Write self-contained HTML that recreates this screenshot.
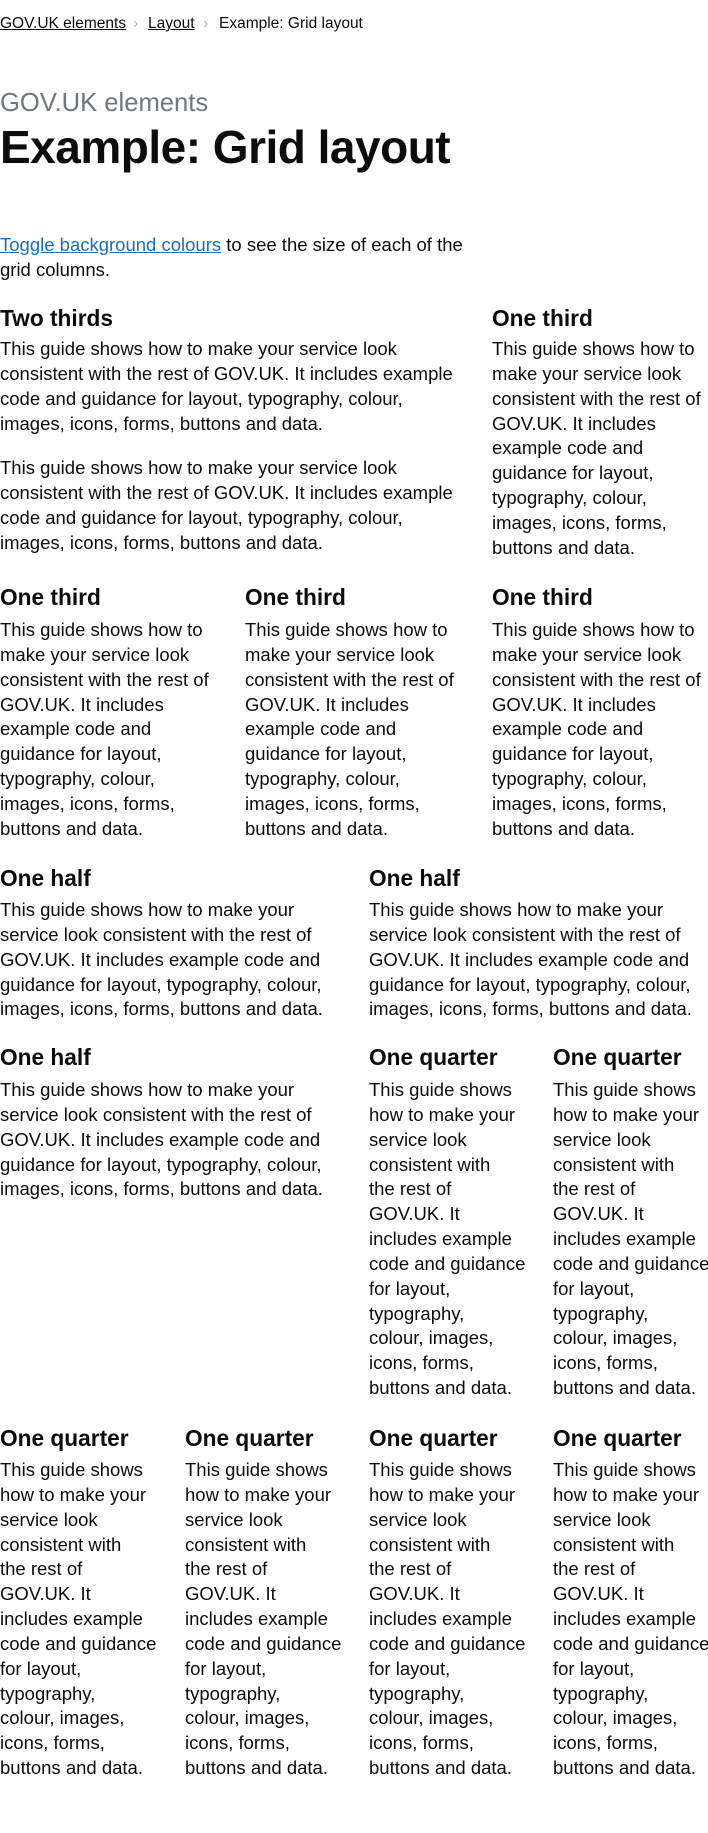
<!DOCTYPE html>
<html><head><meta charset="utf-8"><style>
html,body{margin:0;padding:0;background:#fff;}
body{width:708px;height:1833px;position:relative;overflow:hidden;font-family:"Liberation Sans",sans-serif;color:#0b0c0c;}
.a{position:absolute;white-space:nowrap;}
.h{font-weight:bold;font-size:22.7px;line-height:26px;}
.p{font-size:18.5px;line-height:24.85px;}
a{color:#0b0c0c;}
</style></head><body>
<div class="a" style="top:13px;left:0;font-size:15.5px;line-height:22px;">
<a href="#" style="position:absolute;left:0">GOV.UK elements</a>
<span style="position:absolute;left:133px;color:#b1b4b6">›</span>
<a href="#" style="position:absolute;left:148px">Layout</a>
<span style="position:absolute;left:203px;color:#b1b4b6">›</span>
<span style="position:absolute;left:219px">Example: Grid layout</span>
</div>
<div class="a" style="top:87px;left:0;font-size:25.6px;line-height:32px;color:#6f777b">GOV.UK elements</div>
<div class="a" style="top:121px;left:0;font-size:46px;line-height:52px;font-weight:bold;letter-spacing:-0.5px">Example: Grid layout</div>
<div class="a p" style="top:233px;left:0"><a href="#" style="color:#1d70b8">Toggle background colours</a> to see the size of each of the<br>grid columns.</div>

<div class="a h" style="top:305px;left:0">Two thirds</div>
<div class="a h" style="top:305px;left:492px">One third</div>
<div class="a p" style="top:337px;left:0">This guide shows how to make your service look<br>consistent with the rest of GOV.UK. It includes example<br>code and guidance for layout, typography, colour,<br>images, icons, forms, buttons and data.</div>
<div class="a p" style="top:456px;left:0">This guide shows how to make your service look<br>consistent with the rest of GOV.UK. It includes example<br>code and guidance for layout, typography, colour,<br>images, icons, forms, buttons and data.</div>
<div class="a p" style="top:337px;left:492px">This guide shows how to<br>make your service look<br>consistent with the rest of<br>GOV.UK. It includes<br>example code and<br>guidance for layout,<br>typography, colour,<br>images, icons, forms,<br>buttons and data.</div>

<div class="a h" style="top:584px;left:0">One third</div>
<div class="a h" style="top:584px;left:245px">One third</div>
<div class="a h" style="top:584px;left:492px">One third</div>
<div class="a p" style="top:618px;left:0">This guide shows how to<br>make your service look<br>consistent with the rest of<br>GOV.UK. It includes<br>example code and<br>guidance for layout,<br>typography, colour,<br>images, icons, forms,<br>buttons and data.</div>
<div class="a p" style="top:618px;left:245px">This guide shows how to<br>make your service look<br>consistent with the rest of<br>GOV.UK. It includes<br>example code and<br>guidance for layout,<br>typography, colour,<br>images, icons, forms,<br>buttons and data.</div>
<div class="a p" style="top:618px;left:492px">This guide shows how to<br>make your service look<br>consistent with the rest of<br>GOV.UK. It includes<br>example code and<br>guidance for layout,<br>typography, colour,<br>images, icons, forms,<br>buttons and data.</div>

<div class="a h" style="top:865px;left:0">One half</div>
<div class="a h" style="top:865px;left:369px">One half</div>
<div class="a p" style="top:898px;left:0">This guide shows how to make your<br>service look consistent with the rest of<br>GOV.UK. It includes example code and<br>guidance for layout, typography, colour,<br>images, icons, forms, buttons and data.</div>
<div class="a p" style="top:898px;left:369px">This guide shows how to make your<br>service look consistent with the rest of<br>GOV.UK. It includes example code and<br>guidance for layout, typography, colour,<br>images, icons, forms, buttons and data.</div>

<div class="a h" style="top:1044px;left:0">One half</div>
<div class="a h" style="top:1044px;left:369px">One quarter</div>
<div class="a h" style="top:1044px;left:553px">One quarter</div>
<div class="a p" style="top:1078px;left:0">This guide shows how to make your<br>service look consistent with the rest of<br>GOV.UK. It includes example code and<br>guidance for layout, typography, colour,<br>images, icons, forms, buttons and data.</div>
<div class="a p" style="top:1078px;left:369px">This guide shows<br>how to make your<br>service look<br>consistent with<br>the rest of<br>GOV.UK. It<br>includes example<br>code and guidance<br>for layout,<br>typography,<br>colour, images,<br>icons, forms,<br>buttons and data.</div>
<div class="a p" style="top:1078px;left:553px">This guide shows<br>how to make your<br>service look<br>consistent with<br>the rest of<br>GOV.UK. It<br>includes example<br>code and guidance<br>for layout,<br>typography,<br>colour, images,<br>icons, forms,<br>buttons and data.</div>

<div class="a h" style="top:1425px;left:0">One quarter</div>
<div class="a h" style="top:1425px;left:185px">One quarter</div>
<div class="a h" style="top:1425px;left:369px">One quarter</div>
<div class="a h" style="top:1425px;left:553px">One quarter</div>
<div class="a p" style="top:1458px;left:0">This guide shows<br>how to make your<br>service look<br>consistent with<br>the rest of<br>GOV.UK. It<br>includes example<br>code and guidance<br>for layout,<br>typography,<br>colour, images,<br>icons, forms,<br>buttons and data.</div>
<div class="a p" style="top:1458px;left:185px">This guide shows<br>how to make your<br>service look<br>consistent with<br>the rest of<br>GOV.UK. It<br>includes example<br>code and guidance<br>for layout,<br>typography,<br>colour, images,<br>icons, forms,<br>buttons and data.</div>
<div class="a p" style="top:1458px;left:369px">This guide shows<br>how to make your<br>service look<br>consistent with<br>the rest of<br>GOV.UK. It<br>includes example<br>code and guidance<br>for layout,<br>typography,<br>colour, images,<br>icons, forms,<br>buttons and data.</div>
<div class="a p" style="top:1458px;left:553px">This guide shows<br>how to make your<br>service look<br>consistent with<br>the rest of<br>GOV.UK. It<br>includes example<br>code and guidance<br>for layout,<br>typography,<br>colour, images,<br>icons, forms,<br>buttons and data.</div>
</body></html>
